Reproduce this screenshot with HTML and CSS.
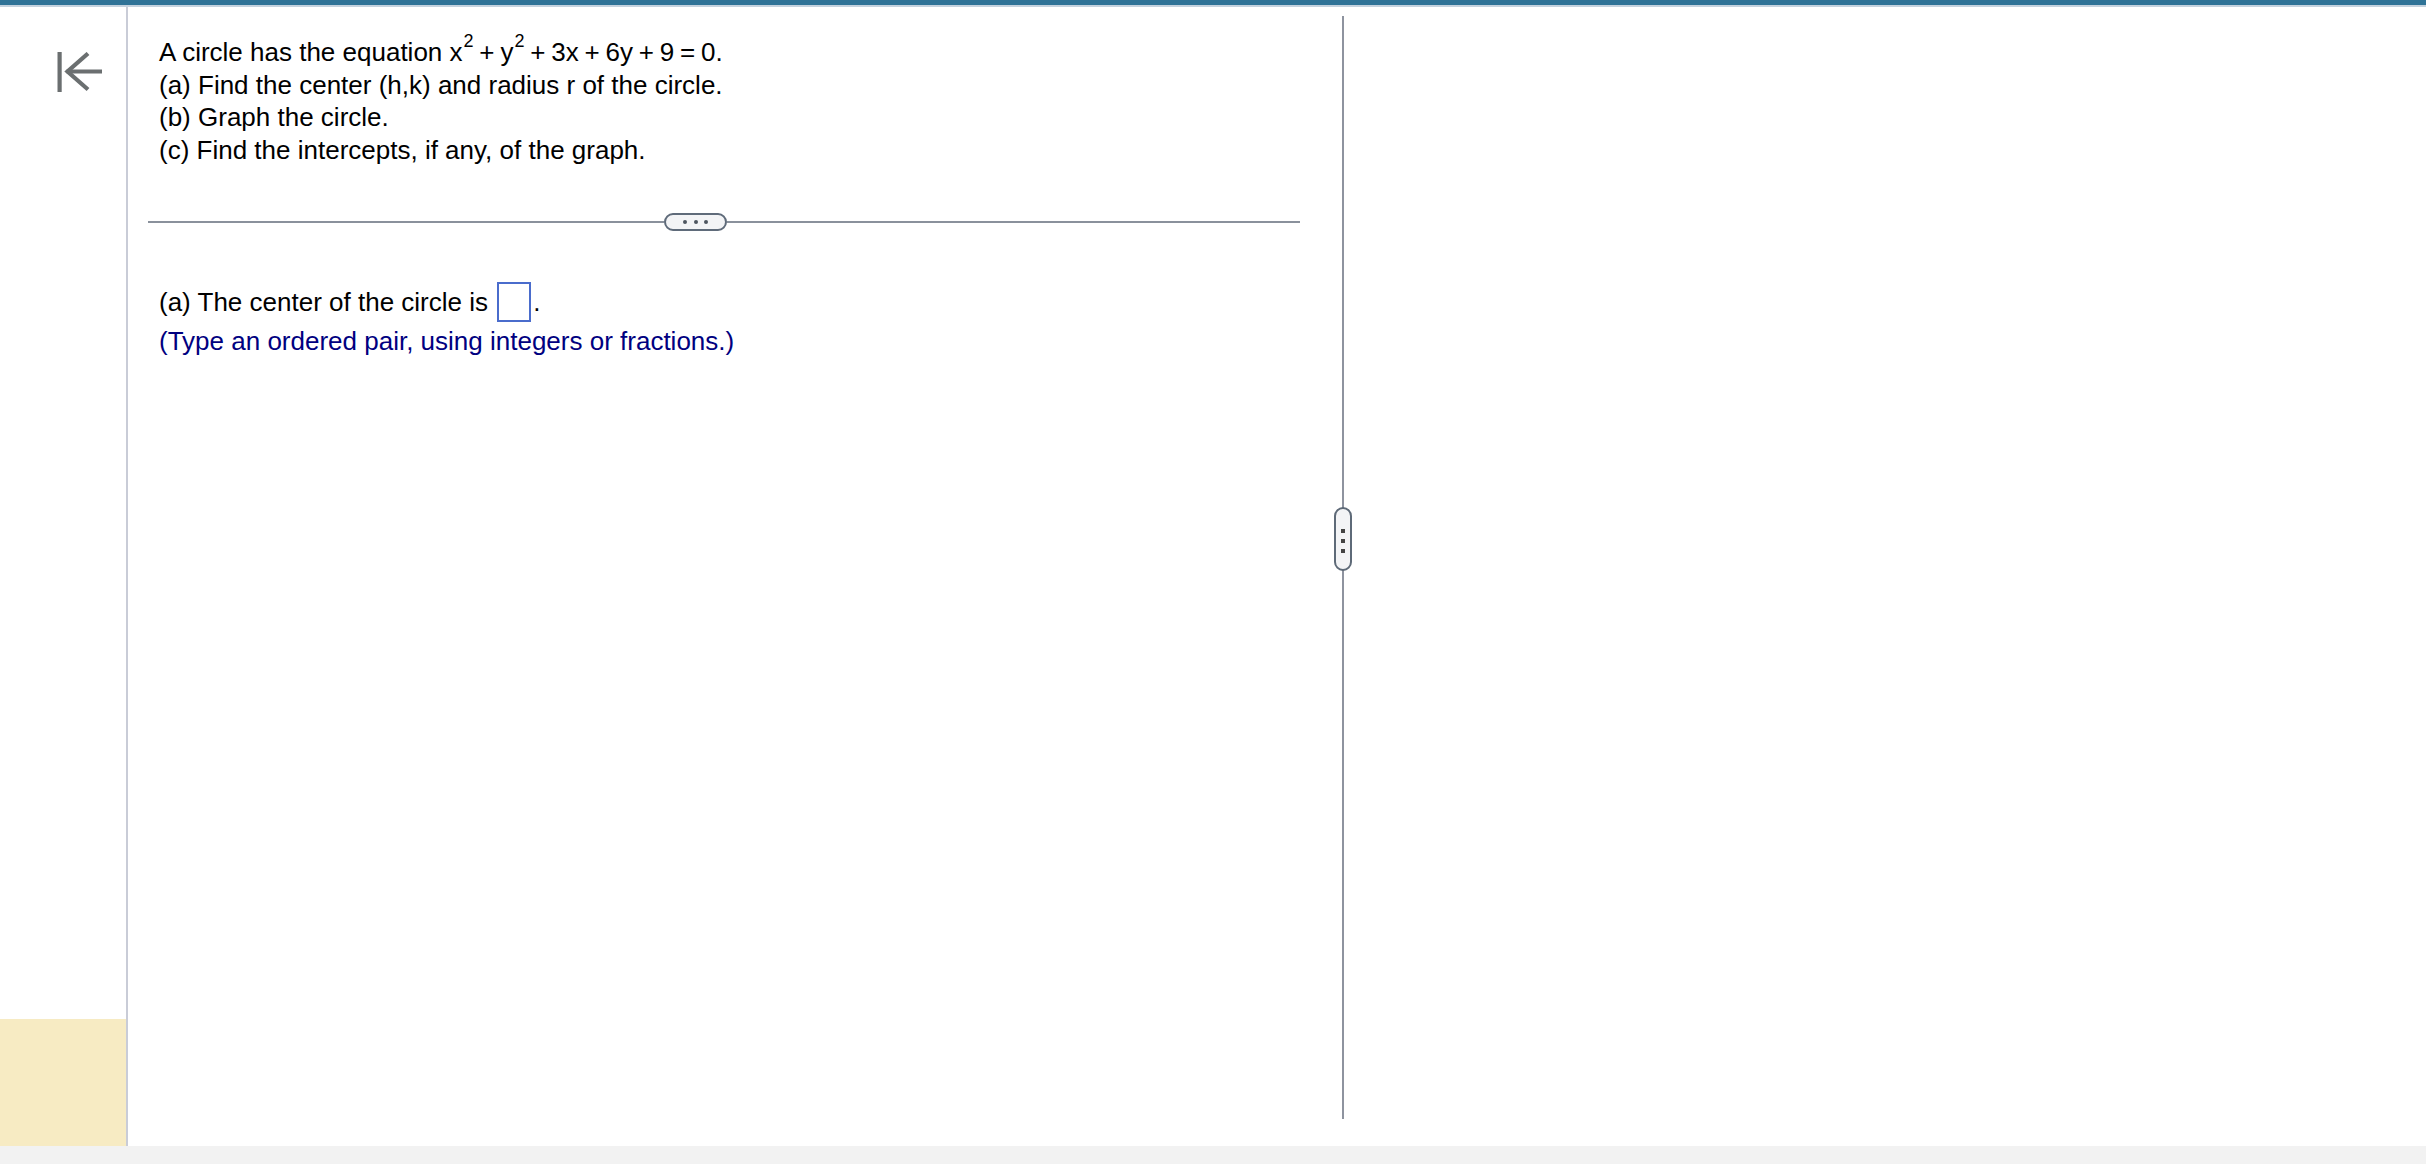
FILE: index.html
```html
<!DOCTYPE html>
<html lang="en">
<head>
<meta charset="utf-8">
<title>Circle equation</title>
<link rel="stylesheet" href="styles.css">
</head>
<body>
<div class="topbar"></div>
<div class="main">
  <aside class="sidebar">
    <button class="back" aria-label="Back">
      <svg width="46" height="40" viewBox="0 0 46 40" fill="none" stroke="#6b6f70" stroke-width="4.2">
        <line x1="2.6" y1="0" x2="2.6" y2="40"/>
        <line x1="9.5" y1="19.5" x2="45" y2="19.5"/>
        <polyline points="31,1.5 10.5,19.5 31,37.5" stroke-linejoin="miter"/>
      </svg>
    </button>
    <div class="note"></div>
  </aside>
  <section class="question-panel">
    <div class="question">
      <p>A circle has the equation <span class="math">x<sup class="exp">2</sup> + y<sup class="exp">2</sup> + 3x + 6y + 9 = 0</span>.</p>
      <p>(a) Find the center (h,k) and radius r of the circle.</p>
      <p>(b) Graph the circle.</p>
      <p>(c) Find the intercepts, if any, of the graph.</p>
    </div>
    <div class="divider">
      <span class="rule rule-left"></span>
      <span class="pill"><i></i><i></i><i></i></span>
      <span class="rule rule-right"></span>
    </div>
    <div class="answer">
      <p class="answer-line">(a) The center of the circle is <span class="input-box"></span><span class="period">.</span></p>
      <p class="hint">(Type an ordered pair, using integers or fractions.)</p>
    </div>
  </section>
  <div class="splitter">
    <span class="grip"><i></i><i></i><i></i></span>
  </div>
  <section class="work-panel"></section>
</div>
<div class="footer"></div>
</body>
</html>
```

FILE: styles.css
```css
html, body {
  margin: 0;
  padding: 0;
}
body {
  width: 2426px;
  height: 1164px;
  overflow: hidden;
  background: #ffffff;
  font-family: "Liberation Sans", Arial, sans-serif;
  font-size: 26px;
  color: #000;
  display: flex;
  flex-direction: column;
}
.topbar {
  height: 5px;
  background: #2f7397;
  border-bottom: 2px solid #c4d2de;
  flex: none;
}
.main {
  height: 1139px;
  display: flex;
  flex: none;
}
.sidebar {
  width: 126px;
  border-right: 2px solid #c9ccd7;
  display: flex;
  flex-direction: column;
  justify-content: space-between;
  flex: none;
}
.back {
  margin: 45px 0 0 57px;
  padding: 0;
  border: 0;
  background: none;
  width: 46px;
  height: 40px;
  display: block;
}
.back svg {
  display: block;
}
.note {
  height: 127px;
  background: #f7ebc3;
}
.question-panel {
  width: 1152px;
  padding: 29px 42px 0 20px;
  flex: none;
}
.question {
  padding-left: 11px;
}
.question p {
  margin: 0;
  line-height: 32.5px;
}
.math {
  word-spacing: -1.4px;
}
.exp {
  font-size: 18px;
  line-height: 0;
  vertical-align: 14px;
  margin-left: 1px;
}
.divider {
  display: flex;
  align-items: center;
  margin-top: 47px;
  height: 18px;
}
.rule {
  height: 2px;
  background: #8a919c;
}
.rule-left {
  width: 516px;
}
.rule-right {
  flex: 1;
}
.pill {
  box-sizing: border-box;
  width: 63px;
  height: 18px;
  border: 2px solid #5f6b7a;
  border-radius: 9px;
  background: #f3f4f6;
  display: flex;
  align-items: center;
  justify-content: center;
  gap: 6.5px;
}
.pill i {
  width: 4px;
  height: 4px;
  border-radius: 50%;
  background: #4e5660;
}
.answer {
  padding-left: 11px;
  margin-top: 51px;
}
.answer-line {
  margin: 0;
  height: 40px;
  display: flex;
  align-items: center;
  white-space: pre;
}
.input-box {
  box-sizing: border-box;
  width: 34px;
  height: 40px;
  border: 2px solid #4a6ccc;
  margin-left: 2px;
}
.period {
  margin-left: 2px;
}
.hint {
  margin: 3px 0 0;
  line-height: 32.5px;
  color: #000080;
}
.splitter {
  width: 2px;
  margin: 9px 0 27px;
  background: #8e939f;
  position: relative;
  flex: none;
}
.grip {
  position: absolute;
  top: 491px;
  left: -8px;
  box-sizing: border-box;
  width: 18px;
  height: 64px;
  border: 2px solid #5e6a78;
  border-radius: 9px;
  background: #f3f4f6;
  display: flex;
  flex-direction: column;
  align-items: center;
  justify-content: center;
  gap: 6px;
  padding-top: 4px;
}
.grip i {
  width: 4px;
  height: 4px;
  background: #444;
}
.work-panel {
  flex: 1;
}
.footer {
  height: 18px;
  background: #f2f2f2;
  flex: none;
}
```
